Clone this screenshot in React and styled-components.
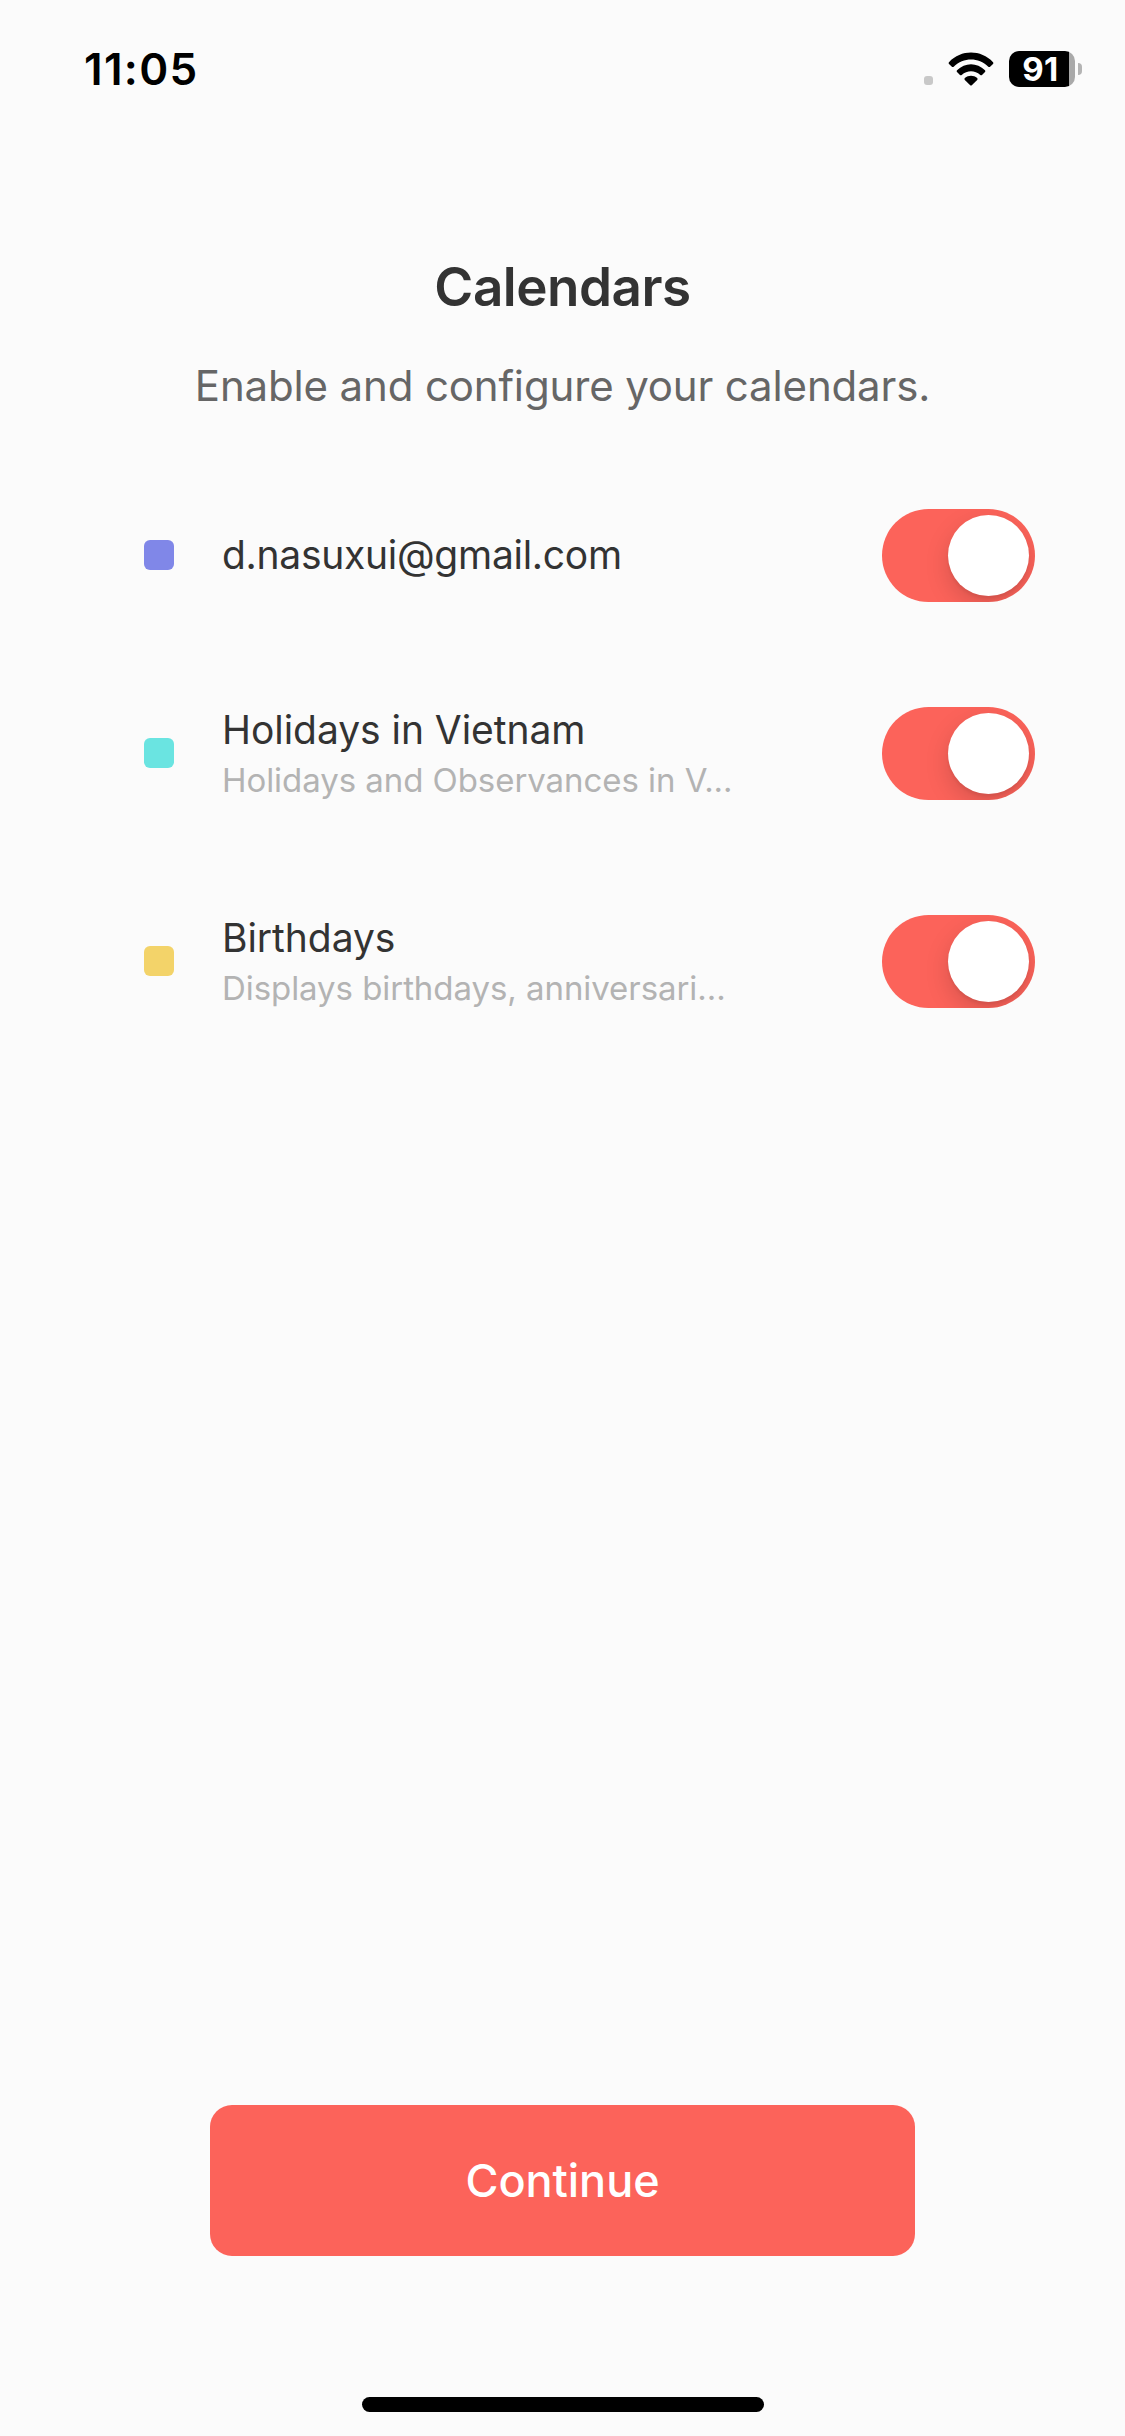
import React, { useState } from 'react';
import styled, { createGlobalStyle } from 'styled-components';

const GlobalStyle = createGlobalStyle`
    * {
        box-sizing: border-box;
    }

    body {
        margin: 0;
        background: #fbfbfb;
        font-family: Inter, "Liberation Sans", sans-serif;
    }
`;

const Screen = styled.div`
    width: 1125px;
    height: 2436px;
    background: #fbfbfb;
    display: flex;
    flex-direction: column;
`;

const StatusBar = styled.div`
    height: 138px;
    padding: 0 43px 0 84px;
    display: flex;
    align-items: center;
    justify-content: space-between;
`;

const Time = styled.span`
    font-size: 44px;
    line-height: 54px;
    font-weight: 600;
    letter-spacing: 1.3px;
    color: #000;
`;

const StatusIcons = styled.div`
    display: flex;
    align-items: center;
`;

const SignalDot = styled.span`
    width: 9px;
    height: 9px;
    margin: 23px 15px 0 0;
    border-radius: 3px;
    background: #c8c8c8;
`;

const Wifi = styled.svg`
    width: 46px;
    height: 34px;
    margin-right: 15px;
`;

const Battery = styled.div`
    width: 66px;
    height: 36px;
    padding-right: 3px;
    border-radius: 10px;
    background: linear-gradient(to right, #000 60px, #a9a9a9 60px);
    color: #fff;
    font-size: 33px;
    line-height: 37px;
    font-weight: 650;
    letter-spacing: 0.5px;
    text-align: center;
`;

const BatteryCap = styled.span`
    width: 4px;
    height: 12px;
    margin-left: 3px;
    border-radius: 0 4px 4px 0;
    background: #b4b4b4;
`;

const Header = styled.header`
    height: 323px;
    padding-top: 116px;
    text-align: center;
`;

const Title = styled.h1`
    margin: 0;
    font-size: 53px;
    line-height: 66px;
    font-weight: 600;
    letter-spacing: -0.5px;
    color: #333;
`;

const Subtitle = styled.p`
    margin: 40px 0 0;
    font-size: 42px;
    line-height: 52px;
    letter-spacing: -0.15px;
    color: #666;
`;

const List = styled.div`
    flex: 1;
`;

const Row = styled.div`
    height: ${({ $tall }) => ($tall ? '208px' : '188px')};
    padding: 0 90px 0 144px;
    display: flex;
    align-items: center;
`;

const ColorMark = styled.span`
    width: 30px;
    height: 30px;
    border-radius: 6px;
    background: ${({ $color }) => $color};
`;

const Info = styled.div`
    flex: 1;
    margin-left: 48px;
    white-space: nowrap;
`;

const Name = styled.div`
    font-size: 39px;
    line-height: 48px;
    letter-spacing: ${({ $tight }) => ($tight ? '-0.28px' : '-0.05px')};
    color: #333;
`;

const Description = styled.div`
    margin-top: 6px;
    font-size: 33px;
    line-height: 40px;
    letter-spacing: -0.06px;
    color: #b3b3b3;
`;

const Switch = styled.button`
    width: 153px;
    height: 93px;
    margin: 1px 0 0;
    padding: 6px;
    border: 0;
    border-radius: 47px;
    background: ${({ $on }) => ($on ? '#fc635a' : '#e5e5e5')};
    display: flex;
    justify-content: ${({ $on }) => ($on ? 'flex-end' : 'flex-start')};
    overflow: hidden;
`;

const Thumb = styled.span`
    width: 81px;
    height: 81px;
    border-radius: 50%;
    background: #fff;
    box-shadow: 0 9px 24px rgba(0, 0, 0, 0.15), 0 3px 3px rgba(0, 0, 0, 0.06);
`;

const Footer = styled.footer`
    height: 331px;
    display: flex;
    flex-direction: column;
    align-items: center;
`;

const ContinueButton = styled.button`
    width: 705px;
    height: 151px;
    padding: 0;
    border: 0;
    border-radius: 22px;
    background: #fc635a;
    color: #fff;
    font-family: inherit;
    font-size: 45px;
    font-weight: 500;
    letter-spacing: -0.05px;
`;

const HomeIndicator = styled.div`
    width: 402px;
    height: 15px;
    margin: 141px 0 0 1px;
    border-radius: 8px;
    background: #000;
`;

const calendars = [
    { name: 'd.nasuxui@gmail.com', color: '#8087e8' },
    { name: 'Holidays in Vietnam', description: 'Holidays and Observances in V...', color: '#6ae4e1' },
    { name: 'Birthdays', description: 'Displays birthdays, anniversari...', color: '#f3d369' },
];

const CalendarRow = ({ calendar }) => {
    const [on, setOn] = useState(true);

    return (
        <Row $tall={Boolean(calendar.description)}>
            <ColorMark $color={calendar.color} />
            <Info>
                <Name $tight={!calendar.description}>{calendar.name}</Name>
                {calendar.description && <Description>{calendar.description}</Description>}
            </Info>
            <Switch $on={on} role="switch" aria-checked={on} aria-label={calendar.name} onClick={() => setOn(!on)}>
                <Thumb />
            </Switch>
        </Row>
    );
};

const App = () => {
    return (
        <>
            <GlobalStyle />
            <Screen>
                <StatusBar>
                    <Time>11:05</Time>
                    <StatusIcons>
                        <SignalDot />
                        <Wifi viewBox="0 0 46 34">
                            <path d="M1 10.2C13-2.6 33-2.6 45 10.2q.8.9 0 1.7l-2.9 2.8q-.9.8-1.8 0C30.5 5.2 15.5 5.2 5.7 14.7q-.9.8-1.8 0L1 11.9q-.8-.8 0-1.7Z" />
                            <path d="M9 18.3C17 10.3 29 10.3 37 18.3q.8.9 0 1.7L34 22.9q-.8.7-1.7 0C26.8 18 19.2 18 13.7 22.9q-.9.7-1.7 0L9 20q-.8-.8 0-1.7Z" />
                            <path d="M16.8 26.1C20.5 22.9 25.5 22.9 29.2 26.1q.9.9 0 1.8L23.8 33.2q-.8.7-1.6 0L16.8 27.9q-.9-.9 0-1.8Z" />
                        </Wifi>
                        <Battery>91</Battery>
                        <BatteryCap />
                    </StatusIcons>
                </StatusBar>
                <Header>
                    <Title>Calendars</Title>
                    <Subtitle>Enable and configure your calendars.</Subtitle>
                </Header>
                <List>
                    {calendars.map((calendar) => (
                        <CalendarRow key={calendar.name} calendar={calendar} />
                    ))}
                </List>
                <Footer>
                    <ContinueButton>Continue</ContinueButton>
                    <HomeIndicator />
                </Footer>
            </Screen>
        </>
    );
};

export default App;
